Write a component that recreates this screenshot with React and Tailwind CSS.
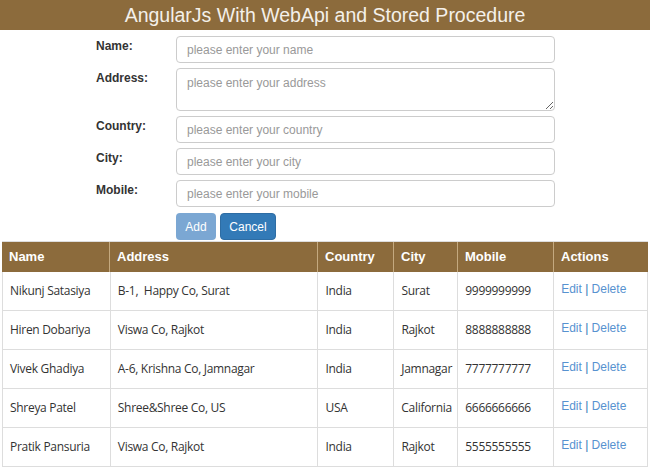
import React from "react";

const rows = [
  ["Nikunj Satasiya", "B-1,  Happy Co, Surat", "India", "Surat", "9999999999"],
  ["Hiren Dobariya", "Viswa Co, Rajkot", "India", "Rajkot", "8888888888"],
  ["Vivek Ghadiya", "A-6, Krishna Co, Jamnagar", "India", "Jamnagar", "7777777777"],
  ["Shreya Patel", "Shree&Shree Co, US", "USA", "California", "6666666666"],
  ["Pratik Pansuria", "Viswa Co, Rajkot", "India", "Rajkot", "5555555555"],
];

const widths = ["w-[107px]", "w-[208px]", "w-[76px]", "w-[64px]", "w-[96px]", "w-[94px]"];
const heads = ["Name", "Address", "Country", "City", "Mobile", "Actions"];

function Field({ label, placeholder, area }) {
  return (
    <div className="flex">
      <div className="w-[80px] pt-[1px] text-[12px] font-bold text-[#333]">{label}</div>
      {area ? (
        <textarea
          placeholder={placeholder}
          className="w-[379px] h-[43px] border border-[#ccc] rounded-[4px] px-[10px] py-[5px] text-[12px] placeholder:text-[#999] outline-none"
        />
      ) : (
        <input
          placeholder={placeholder}
          className="w-[379px] h-[27px] border border-[#ccc] rounded-[4px] px-[10px] text-[12px] placeholder:text-[#999] outline-none"
        />
      )}
    </div>
  );
}

export default function App() {
  return (
    <div className="w-[650px] h-[470px] bg-white font-['Liberation_Sans',Arial,sans-serif] overflow-hidden">
      <div className="h-[30px] bg-[#8c6b3c] text-[#f4f0ea] text-[19.5px] leading-[30px] text-center">
        AngularJs With WebApi and Stored Procedure
      </div>
      <div className="pl-[96px] pt-[6px] flex flex-col gap-[5px]">
        <Field label="Name:" placeholder="please enter your name" />
        <Field label="Address:" placeholder="please enter your address" area />
        <Field label="Country:" placeholder="please enter your country" />
        <Field label="City:" placeholder="please enter your city" />
        <Field label="Mobile:" placeholder="please enter your mobile" />
        <div className="flex pl-[80px] gap-[4px] pt-[1px]">
          <button className="w-[40px] h-[27px] rounded-[4px] bg-[#7ba7d3] text-white text-[12px]">Add</button>
          <button className="w-[56px] h-[27px] rounded-[4px] bg-[#337ab7] border border-[#2e6da4] text-white text-[12px]">Cancel</button>
        </div>
      </div>
      <div className="ml-[2px] mt-[1px] w-[646px] border-t border-[#ddd]">
        <div className="flex h-[30px] bg-[#8c6b3c]">
          {heads.map((h, i) => (
            <div
              key={h}
              className={`${widths[i]} ${i > 0 ? "border-l border-[#c4a97f]" : ""} px-[7px] text-white font-bold text-[13px] leading-[30px]`}
            >
              {h}
            </div>
          ))}
        </div>
        <div className="border-l border-r border-[#ddd]">
          {rows.map((r) => (
            <div key={r[0]} className="flex h-[39px] border-b border-[#ddd]">
              {r.map((c, i) => (
                <div
                  key={i}
                  className={`${widths[i]} ${i > 0 ? "border-l border-[#ddd]" : ""} px-[7px] flex items-center text-[12px] text-[#333] font-['Open_Sans','Noto_Sans',sans-serif] tracking-[-0.3px] whitespace-pre`}
                >
                  {c}
                </div>
              ))}
              <div className={`${widths[5]} border-l border-[#ddd] px-[7px] pt-[8px] text-[12px] text-[#5792d0]`}>
                Edit <span className="text-[#337ab7]">|</span> Delete
              </div>
            </div>
          ))}
        </div>
      </div>
    </div>
  );
}
